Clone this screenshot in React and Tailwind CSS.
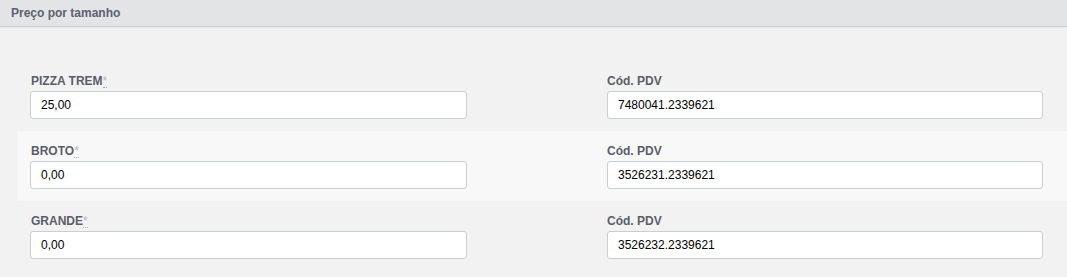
const linhas = [
  { nome: "PIZZA TREM", preco: "25,00", pdv: "7480041.2339621" },
  { nome: "BROTO", preco: "0,00", pdv: "3526231.2339621" },
  { nome: "GRANDE", preco: "0,00", pdv: "3526232.2339621" },
];

export default function App() {
  return (
    <div className="w-[1067px] h-[277px] bg-[#f2f2f2] font-['Liberation_Sans',Arial,sans-serif] overflow-hidden">
      {/* Cabeçalho */}
      <div className="h-[27px] bg-[#e3e4e6] border-b border-[#cfd0d2] shadow-[0_1px_2px_rgba(0,0,0,0.06)] flex items-center pl-[11px]">
        <span className="text-[12px] font-bold text-[#5b6170]">Preço por tamanho</span>
      </div>

      {/* Linhas de preço */}
      <div className="pt-[34px] pl-[17px]">
        {linhas.map((linha, index) => (
          <div
            key={index}
            className={`h-[70px] pl-[13px] pt-[12px] flex gap-[140px] ${index === 1 ? "bg-[#f8f8f8]" : ""}`}
          >
            <div className="w-[437px]">
              <label className="block h-[17px] leading-[17px] text-[12px] font-bold text-[#5a5e68] pl-px">
                {linha.nome}
                <abbr className="no-underline border-b border-dotted border-[#aab0ba] text-[#b3b8c0] font-normal text-[12px] leading-[12px] inline-block">*</abbr>
              </label>
              <input
                readOnly
                value={linha.preco}
                className="mt-px w-full h-[28px] bg-white border border-[#c9cdd4] rounded-[3px] px-[10px] text-[12px] text-black outline-none"
              />
            </div>
            <div className="w-[436px]">
              <label className="block h-[17px] leading-[17px] text-[12px] font-bold text-[#5a5e68]">
                Cód. PDV
              </label>
              <input
                readOnly
                value={linha.pdv}
                className="mt-px w-full h-[28px] bg-white border border-[#c9cdd4] rounded-[3px] px-[10px] text-[12px] text-black outline-none"
              />
            </div>
          </div>
        ))}
      </div>
    </div>
  );
}
